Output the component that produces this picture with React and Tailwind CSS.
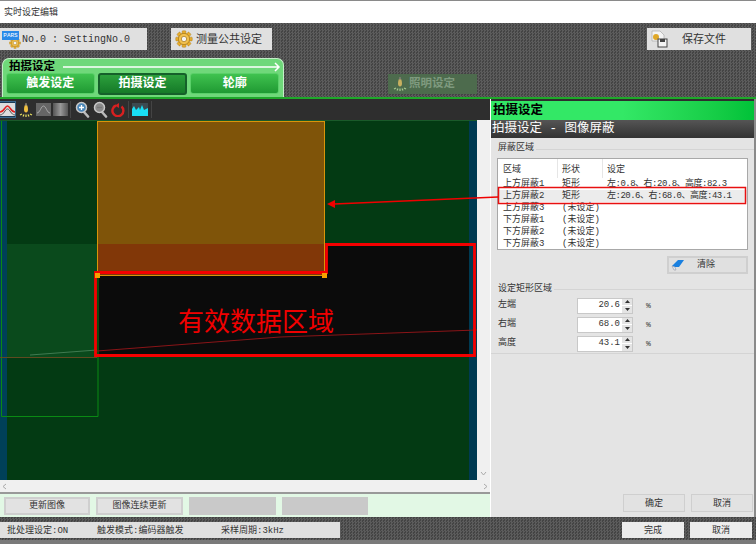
import React from "react";

/* ─── Shared fonts ────────────────────────────────────────────── */
const FONT = "font-['Liberation_Mono','Noto_Sans_CJK_SC',monospace]";

/* ─── Icons ───────────────────────────────────────────────────── */
function Gear({ size = 20 }) {
  const teeth = [0, 45, 90, 135, 180, 225, 270, 315];
  return (
    <svg width={size} height={size} viewBox="0 0 24 24">
      {teeth.map(a => (
        <rect key={a} x="9.5" y="1" width="5" height="6" rx="1" fill="#e8ad2c" stroke="#a87a1a" strokeWidth="0.6" transform={`rotate(${a} 12 12)`} />
      ))}
      <circle cx="12" cy="12" r="7.5" fill="#f2c14e" stroke="#a87a1a" strokeWidth="1" />
      <circle cx="12" cy="12" r="3.6" fill="#f4f4f4" stroke="#a87a1a" strokeWidth="1" />
    </svg>
  );
}

function Bulb({ dim = false }) {
  const c = dim ? "#c8b060" : "#f0c040";
  return (
    <svg width="14" height="16" viewBox="0 0 14 16">
      <path d="M7 1C5.800 3 5 5 5 7.500C5 9.500 5.800 10.500 7 10.500C8.200 10.500 9 9.500 9 7.500C9 5 8.200 3 7 1Z" fill={c} />
      <path d="M6 1.500h2v2H6z" fill="#777" />
      <path d="M1 13l2-1M4 14.500l1-2M7 15v-2.500M10 14.500l-1-2M13 13l-2-1" stroke={dim ? "#a8c890" : "#e8e060"} strokeWidth="1.200" fill="none" />
    </svg>
  );
}

function Magnifier({ plus, color }) {
  return (
    <svg width="15" height="17" viewBox="0 0 15 17">
      <path d="M8.500 10.500L13 15.500" stroke="#bbb" strokeWidth="2.600" strokeLinecap="round" />
      <circle cx="6.500" cy="6.500" r="5" fill={color} stroke="#c8c8c8" strokeWidth="1.500" />
      {plus && <path d="M4 6.500h5M6.500 4v5" stroke="#fff" strokeWidth="1.300" />}
      {!plus && <path d="M4 6.500h5" stroke="#777" strokeWidth="1.300" />}
    </svg>
  );
}

function Toolbar() {
  return (
    <div className="h-[21px] bg-[#2e2e2e] flex items-center">
      <div className="w-4 h-[17px] bg-[#1d3c55] flex items-center justify-center border-y border-r border-[#3b6a8f]">
        <svg width="15" height="13" viewBox="0 0 15 13">
          <rect width="15" height="13" fill="#ddd" />
          <path d="M0 9C4 9 5 3 7.500 3S11 9 15 9" stroke="#e02020" strokeWidth="1.500" fill="none" />
          <path d="M0 12C4 12 5 6 7.500 6S11 12 15 12" stroke="#555" strokeWidth="1" fill="none" />
        </svg>
      </div>
      <div className="w-[19px] flex justify-center"><Bulb /></div>
      <div className="w-[15px] h-[13px] ml-[1px] bg-[#666] flex">
        <svg width="15" height="13" viewBox="0 0 15 13">
          <path d="M1 10C4 10 5 3 7.500 3S11 10 14 10" stroke="#aaa" strokeWidth="1" fill="none" />
        </svg>
      </div>
      <div className="w-[15px] h-[13px] ml-[2px] bg-gradient-to-r from-[#555] via-[#999] to-[#555]" />
      <div className="w-[1px] h-[17px] bg-[#444] ml-[2px]" />
      <div className="ml-[4px] flex"><Magnifier plus color="#4a86b8" /></div>
      <div className="ml-[3px] flex"><Magnifier color="#8a8a8a" /></div>
      <div className="ml-[3px] flex">
        <svg width="14" height="15" viewBox="0 0 14 15">
          <path d="M5 3.500A5.500 5.500 0 1 0 10.500 4.500" stroke="#d82020" strokeWidth="2.400" fill="none" />
          <path d="M8 1l-4 2.500 4 2.500z" fill="#d82020" />
        </svg>
      </div>
      <div className="w-[1px] h-[17px] bg-[#444] ml-[3px]" />
      <div className="ml-[3px] w-[16px] h-[13px] flex">
        <svg width="16" height="13" viewBox="0 0 16 13">
          <rect width="16" height="13" fill="#3c4a50" />
          <path d="M0 13V6l2-3 2 4 3-3 1 3 2-5 2 5 4-2v8z" fill="#19e0f5" />
        </svg>
      </div>
      <div className="w-[1px] h-[17px] bg-[#444] ml-[3px]" />
    </div>
  );
}

/* ─── Canvas with the wave form ───────────────────────────────── */
function Canvas() {
  return (
    <svg width="477" height="360" viewBox="0 120 477 360" className="block">
      <rect x="0" y="120" width="477" height="360" fill="#033a13" />
      <rect x="7" y="244" width="90" height="113" fill="#0a4a1c" />
      <rect x="97" y="244" width="375" height="112" fill="#0b0b0b" />
      <rect x="97" y="121" width="228" height="155" fill="#7f5409" />
      <rect x="97" y="244" width="228" height="32" fill="#813708" />
      <rect x="97.500" y="121.500" width="227" height="154" fill="none" stroke="#d9940a" />
      <rect x="0" y="120" width="7" height="360" fill="#004058" />
      <rect x="469" y="120" width="8" height="360" fill="#003a52" />
      <path d="M1.500 121V416.500H98V276" fill="none" stroke="#0a8a14" />
      <rect x="0" y="120" width="477" height="1" fill="#1a5a2a" />
      <path d="M0 357.500H97" stroke="#5f4a20" strokeWidth="1" fill="none" />
      <path d="M30 355L97 350" stroke="#3f7a50" strokeWidth="1" fill="none" />
      <path d="M97 351L280 337L477 330" stroke="#8a1518" strokeWidth="1" fill="none" />
    </svg>
  );
}

function Scrollbars() {
  return (
    <div className="h-[12px] bg-[#f0f0f0] flex items-center justify-between px-[2px] text-[#aaa]">
      <svg width="5" height="7" viewBox="0 0 5 7"><path d="M4 1L1 3.500 4 6" stroke="#aaa" fill="none" /></svg>
      <svg width="5" height="7" viewBox="0 0 5 7"><path d="M1 1l3 2.500L1 6" stroke="#aaa" fill="none" /></svg>
    </div>
  );
}

/* ─── Left column ─────────────────────────────────────────────── */
function LeftColumn() {
  return (
    <div className="w-[490px] flex flex-col shrink-0">
      <Toolbar />
      <div className="flex h-[360px]">
        <Canvas />
        <div className="w-[13px] bg-[#f0f0f0] flex flex-col justify-end items-center pb-[4px]">
          <svg width="7" height="5" viewBox="0 0 7 5"><path d="M1 1l2.500 3L6 1" stroke="#aaa" fill="none" /></svg>
        </div>
      </div>
      <Scrollbars />
      <div className="h-[2px] bg-[#999]" />
      <div className="h-[23px] bg-[#e2f8e5] flex items-center gap-[6px] pl-[4px] text-[9px] text-[#333]">
        <div className="w-[86px] h-[18px] pt-[2px] bg-[#e2e2e2] border-2 border-[#cfcfcf] flex items-center justify-center">更新图像</div>
        <div className="w-[87px] h-[18px] pt-[2px] bg-[#e2e2e2] border-2 border-[#cfcfcf] flex items-center justify-center">图像连续更新</div>
        <div className="w-[87px] h-[18px] bg-[#c9c9c9]" />
        <div className="w-[86px] h-[18px] bg-[#c9c9c9]" />
      </div>
    </div>
  );
}

/* ─── Right column ────────────────────────────────────────────── */
const ROWS = [
  ["上方屏蔽1", "矩形", "左:0.8、右:20.8、高度:82.3"],
  ["上方屏蔽2", "矩形", "左:20.6、右:68.0、高度:43.1"],
  ["上方屏蔽3", "(未设定)", ""],
  ["下方屏蔽1", "(未设定)", ""],
  ["下方屏蔽2", "(未设定)", ""],
  ["下方屏蔽3", "(未设定)", ""],
];

function MaskTable() {
  return (
    <div className="mx-[6px] h-[92px] bg-white border border-[#a8a8a8] text-[9px] leading-[12px] text-[#333] overflow-hidden">
      <div className="flex h-[19px] items-center">
        <div className="w-[60px] shrink-0 pl-[5px] pt-[2px] border-r border-[#e6e6e6] h-full flex items-center">区域</div>
        <div className="w-[45px] shrink-0 pl-[4px] pt-[2px] border-r border-[#e6e6e6] h-full flex items-center">形状</div>
        <div className="pl-[4px] pt-[2px]">设定</div>
      </div>
      {ROWS.map((r, i) => (
        <div key={r[0]} className={`flex h-[12px] ${i === 1 ? "bg-[#ececec]" : ""}`}>
          <div className="w-[60px] shrink-0 pl-[5px] whitespace-nowrap">{r[0]}</div>
          <div className="w-[45px] shrink-0 pl-[4px] whitespace-nowrap">{r[1]}</div>
          <div className="pl-[4px] whitespace-nowrap tracking-[-0.5px]">{r[2]}</div>
        </div>
      ))}
    </div>
  );
}

function GroupLabel({ children, className = "" }) {
  return (
    <div className={`flex items-center pl-[7px] text-[9px] text-[#333] ${className}`}>
      <span className="whitespace-nowrap">{children}</span>
      <div className="flex-1 h-[1px] bg-[#d4d4d4] ml-[2px]" />
    </div>
  );
}

function SpinRow({ label, value }) {
  return (
    <div className="flex items-center h-[19px] text-[9px] text-[#333]">
      <div className="w-[86px] shrink-0 pl-[7px]">{label}</div>
      <div className="w-[56px] h-[16px] bg-white border border-[#c8c8c8] flex items-center justify-end">
        <span className="pr-[2px]">{value}</span>
        <div className="w-[10px] h-full flex flex-col gap-[1px] bg-white">
          <div className="flex-1 bg-[#e4e4e4] flex items-center justify-center">
            <svg width="5" height="3" viewBox="0 0 5 3"><path d="M0 3l2.500-3L5 3z" fill="#333" /></svg>
          </div>
          <div className="flex-1 bg-[#e4e4e4] flex items-center justify-center">
            <svg width="5" height="3" viewBox="0 0 5 3"><path d="M0 0l2.500 3L5 0z" fill="#333" /></svg>
          </div>
        </div>
      </div>
      <span className="ml-[13px] text-[8px]">%</span>
    </div>
  );
}

function RightColumn() {
  return (
    <div className="w-[264px] shrink-0 flex flex-col border-l border-white bg-[#e4e4e4]">
      <div className="h-[2px] bg-[#2e2e2e]" />
      <div className="h-[19px] bg-gradient-to-r from-[#33e866] via-[#33e866] to-[#00c238] px-[2px] text-[12.5px] leading-[21px] font-bold text-black">
        拍摄设定
      </div>
      <div className="h-[18px] bg-gradient-to-b from-[#555] to-[#333] px-[1px] text-[12.5px] leading-[19px] text-white whitespace-nowrap">
        拍摄设定 - 图像屏蔽
      </div>
      <div className="h-[5px]" />
      <GroupLabel className="h-[12px] mb-[3px]">屏蔽区域</GroupLabel>
      <MaskTable />
      <div className="flex justify-end pr-[6px] mt-[6px]">
        <div className="w-[81px] h-[18px] bg-[#e0e0e0] border-2 border-[#cfcfcf] flex items-center text-[9px] text-[#333]">
          <svg width="14" height="12" viewBox="0 0 14 12" className="ml-[2px]">
            <path d="M1 7l6-6h6L8 8H4z" fill="#1a80e0" />
            <path d="M1 7l3 1 1 3H3z" fill="#dfeaf5" stroke="#889" strokeWidth="0.500" />
          </svg>
          <span className="ml-[12px] pt-[2px]">清除</span>
        </div>
      </div>
      <div className="h-[10px]" />
      <GroupLabel className="h-[11px]">设定矩形区域</GroupLabel>
      <div className="h-[1px]" />
      <SpinRow label="左端" value="20.6" />
      <SpinRow label="右端" value="68.0" />
      <SpinRow label="高度" value="43.1" />
      <div className="border-b border-[#d4d4d4]" />
      <div className="flex-1" />
      <div className="flex justify-end gap-[6px] pr-[1px] pb-[5px] text-[9px] text-[#333]">
        <div className="w-[62px] h-[18px] pt-[3px] bg-[#e2e2e2] border border-[#cfcfcf] flex items-center justify-center">确定</div>
        <div className="w-[62px] h-[18px] pt-[3px] bg-[#e2e2e2] border border-[#cfcfcf] flex items-center justify-center">取消</div>
      </div>
    </div>
  );
}

/* ─── Header ──────────────────────────────────────────────────── */
function Header() {
  return (
    <div className="h-[74px] px-0 pt-[5px] flex flex-col">
      <div className="flex h-[22px] text-[#333] text-[11px]">
        <div className="w-[147px] bg-[#e0e0e0] flex items-center relative">
          <span className="absolute left-[2px] top-[3px] w-[17px] h-[9px] bg-[#2a8ae8] text-white text-[6px] leading-[9px] text-center">PARS</span>
          <div className="ml-[9px] mt-[8px] flex"><Gear size={12} /></div>
          <span className="ml-[1px] text-[10px] whitespace-nowrap">No.0 : SettingNo.0</span>
        </div>
        <div className="w-[101px] ml-[24px] bg-[#e0e0e0] flex items-center">
          <div className="ml-[4px] flex"><Gear size={18} /></div>
          <span className="ml-[3px] pt-[2px] text-[11px] whitespace-nowrap">测量公共设定</span>
        </div>
        <div className="flex-1" />
        <div className="w-[104px] mr-[5px] bg-[#e0e0e0] flex items-center">
          <svg width="18" height="18" viewBox="0 0 18 18" className="ml-[3px]">
            <path d="M2 1h8l4 4v6H2z" fill="#f4f4f4" stroke="#aaa" strokeWidth="0.700" />
            <circle cx="6" cy="7" r="3" fill="#e0a828" />
            <rect x="8" y="9" width="9" height="8" fill="#f4f4f4" stroke="#444" />
            <rect x="10" y="9" width="5" height="3" fill="#444" />
          </svg>
          <span className="ml-[14px] pt-[2px] text-[11px] whitespace-nowrap">保存文件</span>
        </div>
      </div>
      <div className="flex mt-[8px] items-start">
        <div className="ml-[2px] w-[282px] h-[39px] bg-[#6fd87a] border-t border-x border-[#c4eec8] rounded-t-[7px] pl-[3px] pr-[4px]">
          <div className="flex items-center h-[14px] pl-[3px] pt-[2px]">
            <span className="text-[11.5px] font-bold text-black whitespace-nowrap">拍摄设定</span>
            <div className="flex-1 ml-[8px] mr-[2px] flex">
              <svg width="218" height="10" viewBox="0 0 218 10">
                <path d="M0 5h216M212 1l4 4-4 4" stroke="#fff" strokeWidth="1.500" fill="none" />
              </svg>
            </div>
          </div>
          <div className="flex gap-[3px] text-white text-[12px] font-bold">
            <div className="w-[89px] h-[21px] rounded-[3px] bg-gradient-to-b from-[#3fc24f] to-[#1f9a33] border border-[#5ad069] flex items-center justify-center">触发设定</div>
            <div className="w-[90px] h-[22px] rounded-[3px] bg-gradient-to-b from-[#2ca03c] to-[#157a28] border-2 border-[#15602a] flex items-center justify-center">拍摄设定</div>
            <div className="w-[89px] h-[21px] rounded-[3px] bg-gradient-to-b from-[#3fc24f] to-[#1f9a33] border border-[#5ad069] flex items-center justify-center">轮廓</div>
          </div>
        </div>
        <div className="ml-[104px] mt-[16px] w-[89px] h-[20px] bg-[#4d6b4d] flex items-center text-[#7f9a7f] text-[11.5px] font-bold">
          <div className="ml-[5px] flex"><Bulb dim /></div>
          <span className="ml-[2px] whitespace-nowrap">照明设定</span>
        </div>
      </div>
    </div>
  );
}

/* ─── Page ────────────────────────────────────────────────────── */
export default function App() {
  return (
    <div className={`relative w-[756px] h-[544px] overflow-hidden bg-[repeating-conic-gradient(#5c5c5c_0_25%,#444444_0_50%)] bg-[length:3px_3px] ${FONT}`}>
      <div className="h-[1px] bg-[#8a8a8a]" />
      <div className="h-[22px] bg-white text-[9px] leading-[24px] pl-[4px] text-[#333]">实时设定编辑</div>
      <Header />
      <div className="h-[2px] bg-[#1fa82a]" />
      <div className="flex h-[418px] bg-[#8a8a8a]">
        <LeftColumn />
        <RightColumn />
      </div>
      {/* Bottom bar */}
      <div className="flex h-[16px] mt-[5px] text-[9px] text-[#333]">
        <div className="w-[340px] pt-[3px] bg-[#e0e0e0] flex items-center pl-[7px] whitespace-nowrap">
          <span className="w-[90px]">批处理设定:ON</span>
          <span className="w-[124px]">触发模式:编码器触发</span>
          <span>采样周期:3kHz</span>
        </div>
        <div className="flex-1" />
        <div className="w-[62px] pt-[3px] bg-[#ececec] flex items-center justify-center">完成</div>
        <div className="w-[62px] pt-[3px] ml-[6px] mr-[4px] bg-[#ececec] flex items-center justify-center">取消</div>
      </div>
      <div className="absolute left-0 right-0 bottom-0 h-[4px] bg-[#7a7a7a]" />

      {/* Red annotations drawn over the screenshot */}
      <svg width="756" height="544" viewBox="0 0 756 544" className="absolute left-0 top-0 pointer-events-none">
        <path d="M95.500 272.500H326.500V244.500H474.500V355.500H95.500Z" fill="none" stroke="#f40000" strokeWidth="2.800" />
        <rect x="95" y="273" width="5" height="5" fill="#f5a000" />
        <rect x="322" y="273" width="5" height="5" fill="#f5a000" />
        <rect x="498.500" y="187.500" width="247" height="16" fill="none" stroke="#e81010" strokeWidth="1.500" />
        <path d="M498 197L334 204" stroke="#f00000" strokeWidth="1.500" />
        <path d="M327 204l8-4v8z" fill="#f00000" />
      </svg>
      <div className="absolute left-[178px] top-[302px] text-[26px] leading-[36px] text-[#f00000] font-['Noto_Sans_CJK_SC',sans-serif] whitespace-nowrap">有效数据区域</div>
    </div>
  );
}
